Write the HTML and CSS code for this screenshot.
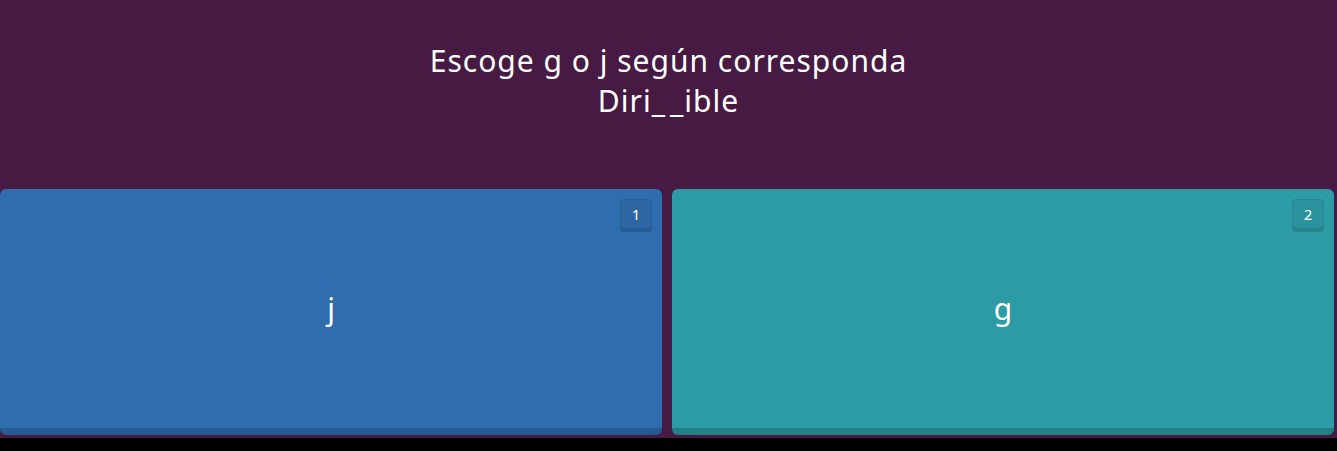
FILE: index.html
```html
<!DOCTYPE html>
<html lang="es">
<head>
    <meta charset="UTF-8">
    <meta name="viewport" content="width=device-width, initial-scale=1.0">
    <title>Escoge g o j</title>
    <link rel="stylesheet" href="styles.css">
</head>
<body>

<div class="quiz">
    <!-- Question -->
    <div class="question">
        <p>Escoge g o j según corresponda</p>
        <p>Diri_&#8202;_ible</p>
    </div>

    <!-- Answer options -->
    <div class="options">
        <div class="option blue">
            <span class="key">1</span>
            <span class="answer">j</span>
        </div>
        <div class="option teal">
            <span class="key">2</span>
            <span class="answer">g</span>
        </div>
    </div>
</div>

</body>
</html>
```

FILE: styles.css
```css
body {
    margin: 0;
    background: #000;
    font-family: "Noto Sans", sans-serif;
    color: #fff;
}
.quiz {
    background: #461a42;
    height: 438px;
}
.question {
    height: 189px;
    box-sizing: border-box;
    padding-top: 41px;
    text-align: center;
    font-size: 30px;
    letter-spacing: 1px;
    line-height: 40px;
}
.question p {
    margin: 0;
}
.options {
    display: flex;
    gap: 10px;
    padding-right: 3px;
}
.option {
    position: relative;
    flex: 1;
    height: 239px;
    border-radius: 6px;
    display: flex;
    align-items: center;
    justify-content: center;
    font-size: 30px;
}
.blue {
    background: #2f6dae;
    border-bottom: 7px solid #275a8f;
}
.teal {
    background: #2d9ba6;
    border-bottom: 7px solid #247e86;
}
.key {
    position: absolute;
    top: 10px;
    right: 10px;
    width: 30px;
    height: 28px;
    border-radius: 4px;
    font-size: 15px;
    line-height: 28px;
    text-align: center;
}
.blue .key {
    background: #2d66a4;
    border: 1px solid #2a5d96;
    box-shadow: 0 3px 0 #285b93;
}
.teal .key {
    background: #2a929c;
    border: 1px solid #28868f;
    box-shadow: 0 3px 0 #26848c;
}
```
